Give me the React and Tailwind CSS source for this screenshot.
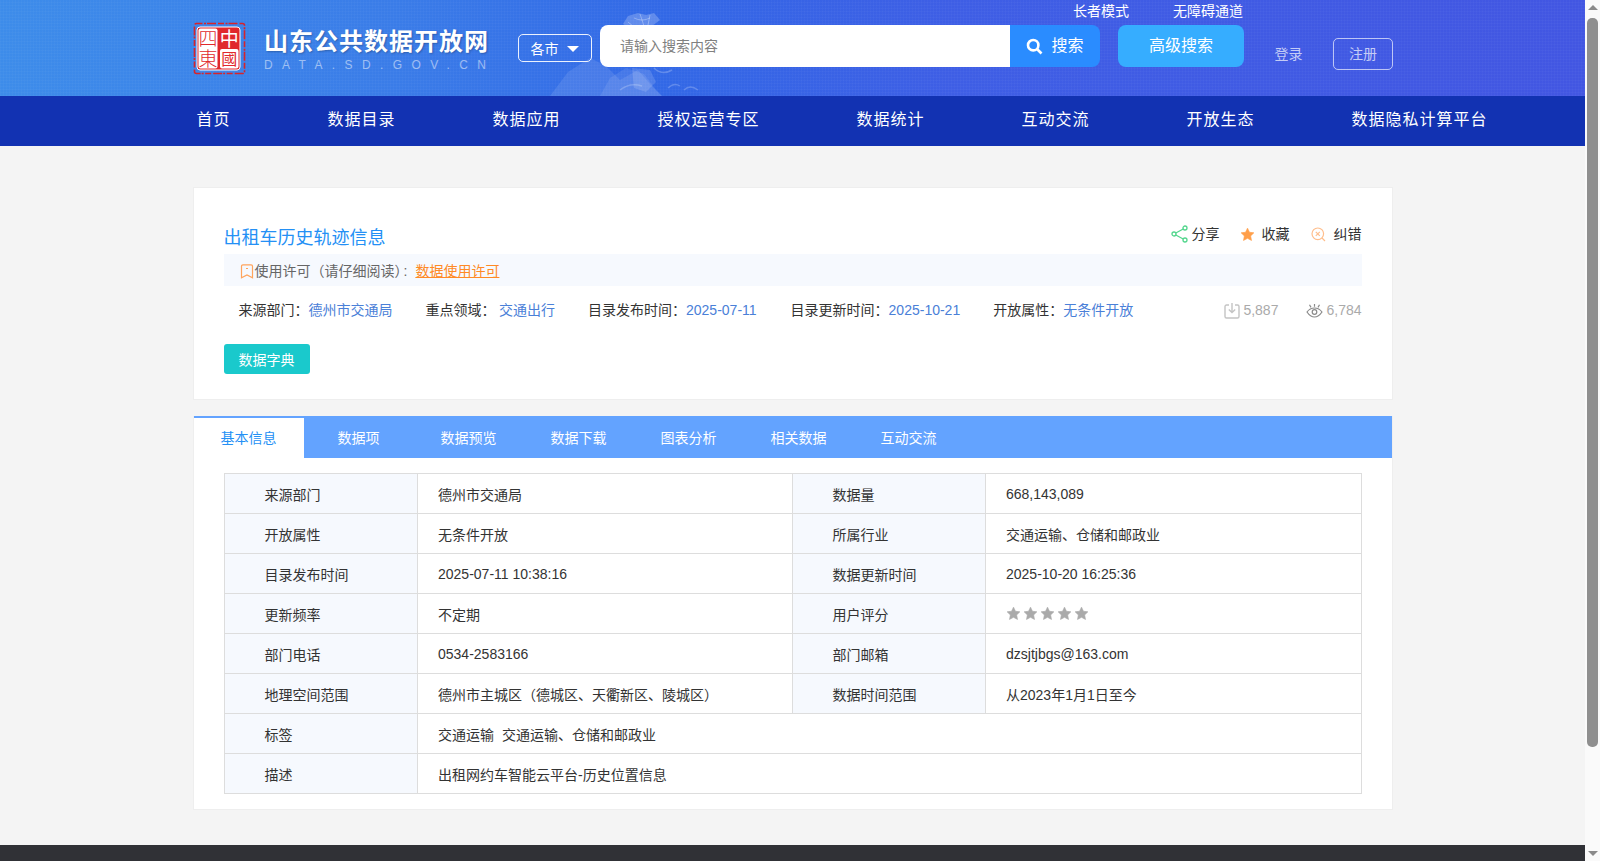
import React from "react";

const font = "font-['Liberation_Sans','Noto_Sans_CJK_SC',sans-serif]";

function Logo() {
  return (
    <svg width="56" height="58" viewBox="0 0 56 58" className="shrink-0">
      <rect x="3.500" y="3.500" width="50" height="50" rx="2" fill="none" stroke="#d8232a" strokeWidth="1.600" strokeDasharray="6 1.500 2 1 9 2" />
      <rect x="6" y="7" width="43" height="43" rx="3" fill="#e0282c" stroke="#fff" strokeWidth="1" />
      <rect x="7.500" y="8.500" width="19" height="40" rx="2" fill="#fff" />
      <rect x="29" y="29" width="18.500" height="19.500" rx="2" fill="#fff" />
      <text x="17" y="26" textAnchor="middle" fontSize="19" fontWeight="300" fill="#e0282c" fontFamily="'Noto Sans CJK SC',sans-serif">四</text>
      <text x="17" y="45.500" textAnchor="middle" fontSize="19" fontWeight="300" fill="#e0282c" fontFamily="'Noto Sans CJK SC',sans-serif">東</text>
      <text x="38.200" y="26" textAnchor="middle" fontSize="19" fill="#fff" fontFamily="'Noto Sans CJK SC',sans-serif">中</text>
      <text x="38.200" y="45" textAnchor="middle" fontSize="16" fill="#e0282c" fontFamily="'Noto Sans CJK SC',sans-serif">國</text>
    </svg>
  );
}

function Decor() {
  return (
    <svg width="180" height="96" viewBox="0 0 180 96" className="absolute left-[550px] top-0 pointer-events-none">
      <path d="M0 96 L18 72 L40 58 L56 66 L70 80 L88 70 L100 84 L112 96 Z" fill="#fff" opacity="0.1" />
      <path d="M50 96 L60 78 L76 68 L94 74 L106 90 L112 96 Z" fill="#fff" opacity="0.09" />
      <path d="M73 24 L78 16 L88 13 L96 15 L104 13 L110 20 L102 26 L92 28 L80 28 Z" fill="#fff" opacity="0.22" />
      <path d="M82 68 L100 70 L106 82 L96 92 L84 88 Z" fill="#fff" opacity="0.14" />
      <path d="M118 88 Q124 82 130 86 M134 90 Q140 84 148 90 M104 68 Q112 76 122 70 M70 90 Q80 82 92 86" fill="none" stroke="#fff" strokeWidth="1.500" opacity="0.22" />
      <path d="M84 18 Q92 22 100 18 M90 14 L94 26 M78 22 L84 27 M100 15 L98 25" fill="none" stroke="#fff" strokeWidth="1" opacity="0.3" />
    </svg>
  );
}

function Star({ color = "#aaaaaa", size = 15 }) {
  return (
    <svg width={size} height={size} viewBox="0 0 24 24" className="shrink-0">
      <path d="M12 1.800l3.100 6.600 7.100.9-5.200 5 1.400 7.200L12 18.100l-6.400 3.400L7 14.300l-5.200-5 7.100-.9z" fill={color} stroke={color} strokeWidth="1" strokeLinejoin="round" />
    </svg>
  );
}

function ShareIcon() {
  return (
    <svg width="17" height="18" viewBox="0 0 17 18" fill="none" stroke="#52d68c" strokeWidth="1.300" className="shrink-0">
      <circle cx="3" cy="9" r="2" />
      <circle cx="14" cy="3" r="2" />
      <circle cx="14" cy="15" r="2" />
      <path d="M4.800 8L12.200 4M4.800 10l7.400 4" />
    </svg>
  );
}

function CorrectIcon() {
  return (
    <svg width="15" height="15" viewBox="0 0 15 15" fill="none" stroke="#ffbe8c" strokeWidth="1.200" className="shrink-0">
      <circle cx="6.800" cy="6.800" r="5.800" />
      <path d="M4.800 4.800l4 4M8.800 4.800l-4 4M11 11l3 3" />
    </svg>
  );
}

function BookmarkIcon() {
  return (
    <svg width="14" height="15" viewBox="0 0 14 15" fill="none" stroke="#ffa45c" strokeWidth="1.200" className="shrink-0">
      <path d="M1.500 2.200a1.400 1.400 0 0 1 1.400-1.400h8.200a1.400 1.400 0 0 1 1.400 1.400v11.600L7 11 1.500 13.800z" />
      <path d="M6 4.500h2" />
    </svg>
  );
}

function DownloadIcon() {
  return (
    <svg width="16" height="17" viewBox="0 0 16 17" fill="none" stroke="#c4c4c4" strokeWidth="1.400" className="shrink-0">
      <path d="M5 3H2.500A1.500 1.500 0 0 0 1 4.500v10A1.500 1.500 0 0 0 2.500 16h11a1.500 1.500 0 0 0 1.500-1.500v-10A1.500 1.500 0 0 0 13.500 3H11" />
      <path d="M8 1v9M4.800 7.500L8 10.500l3.200-3" />
    </svg>
  );
}

function EyeIcon() {
  return (
    <svg width="17" height="15" viewBox="0 0 17 15" fill="none" stroke="#8a8a8a" strokeWidth="1.200" className="shrink-0">
      <path d="M1 9C3.200 6 5.800 5 8.500 5s5.300 1 7.500 4c-2.200 3.200-4.800 5-7.500 5S3.200 12.200 1 9z" />
      <circle cx="8.500" cy="9" r="2.300" />
      <path d="M8.500 1v2.800M3.500 1.800l1.500 2.600M13.500 1.800L12 4.400" />
    </svg>
  );
}

const nav = ["首页", "数据目录", "数据应用", "授权运营专区", "数据统计", "互动交流", "开放生态", "数据隐私计算平台"];
const tabs = ["基本信息", "数据项", "数据预览", "数据下载", "图表分析", "相关数据", "互动交流"];

const rows = [
  ["来源部门", "德州市交通局", "数据量", "668,143,089"],
  ["开放属性", "无条件开放", "所属行业", "交通运输、仓储和邮政业"],
  ["目录发布时间", "2025-07-11 10:38:16", "数据更新时间", "2025-10-20 16:25:36"],
  ["更新频率", "不定期", "用户评分", "stars"],
  ["部门电话", "0534-2583166", "部门邮箱", "dzsjtjbgs@163.com"],
  ["地理空间范围", "德州市主城区（德城区、天衢新区、陵城区）", "数据时间范围", "从2023年1月1日至今"],
];

const th = "border border-[#dddddd] bg-[#f6f9fe] pl-10 pt-[2px] text-left font-normal";
const tdCjk = "border border-[#dddddd] pl-[20.5px] pt-[2px] text-left";
const tdLatin = "border border-[#dddddd] pl-[20.5px] text-left";
const isLatin = (s) => /^[\x00-\x7f]+$/.test(s);

export default function App() {
  return (
    <div className={`flex h-screen overflow-hidden bg-[#f4f4f4] text-sm text-[#333333] ${font}`}>
      <div className="w-[1585px] shrink-0 overflow-hidden">
        <header className="relative h-[96px] bg-[repeating-linear-gradient(0deg,rgba(255,255,255,0.025)_0_1px,transparent_1px_3px),repeating-linear-gradient(90deg,rgba(255,255,255,0.025)_0_1px,transparent_1px_3px),linear-gradient(90deg,#3d8cea_0%,#3a7ce8_25%,#3268e6_42%,#3e5ee5_60%,#4256e2_100%)]">
          <Decor />
          <div className="relative flex pl-[191px]">
            <div className="mt-[20px]"><Logo /></div>
            <div className="ml-[17px] mt-[27px] w-[254px]">
              <div className="text-2xl leading-[30px] font-bold tracking-[1px] text-white [text-shadow:1px_1px_2px_rgba(0,0,0,0.25)]">山东公共数据开放网</div>
              <div className="text-xs leading-[16px] tracking-[9.4px] whitespace-nowrap text-white/50">DATA.SD.GOV.CN</div>
            </div>
            <div className="mt-[34px] flex h-[28px] w-[74px] items-center justify-center gap-2 rounded-[5px] border border-white/90 pt-[2px] pr-px text-sm text-white">
              各市
              <span className="h-0 w-0 border-x-[6px] border-t-[6px] border-x-transparent border-t-white" />
            </div>
            <div className="ml-2">
              <div className="flex h-[25px] w-[643px] justify-end gap-11 text-sm leading-[22px] text-white">
                <span>长者模式</span>
                <span>无障碍通道</span>
              </div>
              <div className="flex">
                <div className="flex h-[42px] w-[410px] items-center rounded-l-lg bg-white pl-5 text-sm text-[#808080]">请输入搜索内容</div>
                <div className="flex h-[42px] w-[90px] items-center justify-center gap-2 rounded-r-lg bg-[#2a8cff] text-base text-white">
                  <svg width="17" height="17" viewBox="0 0 17 17" fill="none" stroke="#fff" strokeWidth="2.600" className="shrink-0">
                    <circle cx="7.200" cy="7.200" r="5.200" />
                    <path d="M11 11l4.500 4.500" />
                  </svg>
                  搜索
                </div>
                <div className="ml-[18px] flex h-[42px] w-[126px] items-center justify-center rounded-lg bg-[#36adff] text-base text-white">高级搜索</div>
                <span className="mt-[9px] ml-[30.5px] text-sm leading-[40px] text-white/70">登录</span>
                <div className="mt-[13px] ml-[30.5px] flex h-[32px] w-[60px] items-center justify-center rounded-[5px] border border-white/65 text-sm text-white/70">注册</div>
              </div>
            </div>
          </div>
        </header>

        <nav className="flex h-[50px] items-center gap-[97px] bg-[#1232b2] pb-[2px] pl-[196.5px] text-base tracking-[1px] text-white">
          {nav.map((n) => (
            <span key={n} className="whitespace-nowrap">{n}</span>
          ))}
        </nav>

        <main className="ml-[192.5px] w-[1200px]">
          <section className="mt-[41px] h-[213px] border border-[#eeeeee] bg-white px-[30px] pt-[35px]">
            <div className="flex h-[31px] items-start justify-between">
              <h1 className="text-lg leading-[30px] font-normal text-[#2490f5]">出租车历史轨迹信息</h1>
              <div className="flex items-center text-sm leading-[22px]">
                <ShareIcon />
                <span className="ml-[4px]">分享</span>
                <span className="ml-5"><Star color="#ff9f4a" /></span>
                <span className="ml-[7px]">收藏</span>
                <span className="ml-[21px]"><CorrectIcon /></span>
                <span className="ml-2">纠错</span>
              </div>
            </div>
            <div className="flex h-8 items-center bg-[#f6f9fe] pt-[2px] pl-4 text-sm text-[#666666]">
              <BookmarkIcon />
              <span className="ml-px">使用许可（请仔细阅读）</span>
              <span className="ml-[-5px]">:</span>
              <span className="ml-2 text-[#ff8a25] underline">数据使用许可</span>
            </div>
            <div className="flex h-12 items-center pl-[15px] text-sm whitespace-nowrap">
              <span>来源部门：</span>
              <span className="text-[#4a80d8]">德州市交通局</span>
              <span className="ml-[33px]">重点领域：</span>
              <span className="ml-[3.5px] text-[#4a80d8]">交通出行</span>
              <span className="ml-[33px]">目录发布时间：</span>
              <span className="text-[#4a80d8]">2025-07-11</span>
              <span className="ml-[34px]">目录更新时间：</span>
              <span className="text-[#4a80d8]">2025-10-21</span>
              <span className="ml-[33px]">开放属性：</span>
              <span className="text-[#4a80d8]">无条件开放</span>
              <span className="ml-auto flex items-center text-[#aaaaaa]">
                <DownloadIcon />
                <span className="ml-[3px]">5,887</span>
                <span className="ml-[28px]"><EyeIcon /></span>
                <span className="ml-[3px]">6,784</span>
              </span>
            </div>
            <button className="mt-[10px] flex h-[30px] w-[86px] items-center justify-center rounded-[3px] bg-[#1ac9cc] pt-[2px] text-sm text-white">数据字典</button>
          </section>

          <section className="mt-[16px] h-[394px] border border-t-0 border-[#eeeeee] bg-white">
            <div className="flex h-[42px] bg-[#63a3ff] pt-[2px] text-sm text-white">
              {tabs.map((t, i) => (
                <div
                  key={t}
                  className={`flex h-10 w-[110px] items-center justify-center ${i === 0 ? "bg-white text-[#2490f5]" : ""}`}
                >
                  {t}
                </div>
              ))}
            </div>
            <div className="px-[30px] pt-[15px]">
              <table className="w-full table-fixed border-collapse text-sm">
                <colgroup>
                  <col className="w-[193px]" />
                  <col className="w-[375px]" />
                  <col className="w-[193px]" />
                  <col />
                </colgroup>
                <tbody>
                  {rows.map((r) => (
                    <tr key={r[0]} className="h-10">
                      <th className={th}>{r[0]}</th>
                      <td className={isLatin(r[1]) ? tdLatin : tdCjk}>{r[1]}</td>
                      <th className={th}>{r[2]}</th>
                      <td className={isLatin(r[3]) ? tdLatin : tdCjk}>
                        {r[3] === "stars" ? (
                          <div className="flex gap-[2px]">
                            {[0, 1, 2, 3, 4].map((s) => (
                              <Star key={s} />
                            ))}
                          </div>
                        ) : (
                          r[3]
                        )}
                      </td>
                    </tr>
                  ))}
                  <tr className="h-10">
                    <th className={th}>标签</th>
                    <td className={tdCjk} colSpan={3}>
                      <span>交通运输</span>
                      <span className="ml-2">交通运输、仓储和邮政业</span>
                    </td>
                  </tr>
                  <tr className="h-10">
                    <th className={th}>描述</th>
                    <td className={tdCjk} colSpan={3}>出租网约车智能云平台-历史位置信息</td>
                  </tr>
                </tbody>
              </table>
            </div>
          </section>
        </main>
        <footer className="mt-[35px] h-[60px] bg-[#303136]" />
      </div>

      <div className="flex w-[15px] shrink-0 flex-col items-center bg-[#fafafa]">
        <span className="mt-[5px] h-0 w-0 border-x-[5px] border-b-[5px] border-x-transparent border-b-[#8a8a8a]" />
        <div className="mt-[8px] h-[729px] w-[11px] rounded-[5px] bg-[#8f8f8f]" />
        <span className="mt-auto mb-[5px] h-0 w-0 border-x-[5px] border-t-[5px] border-x-transparent border-t-[#8a8a8a]" />
      </div>
    </div>
  );
}
